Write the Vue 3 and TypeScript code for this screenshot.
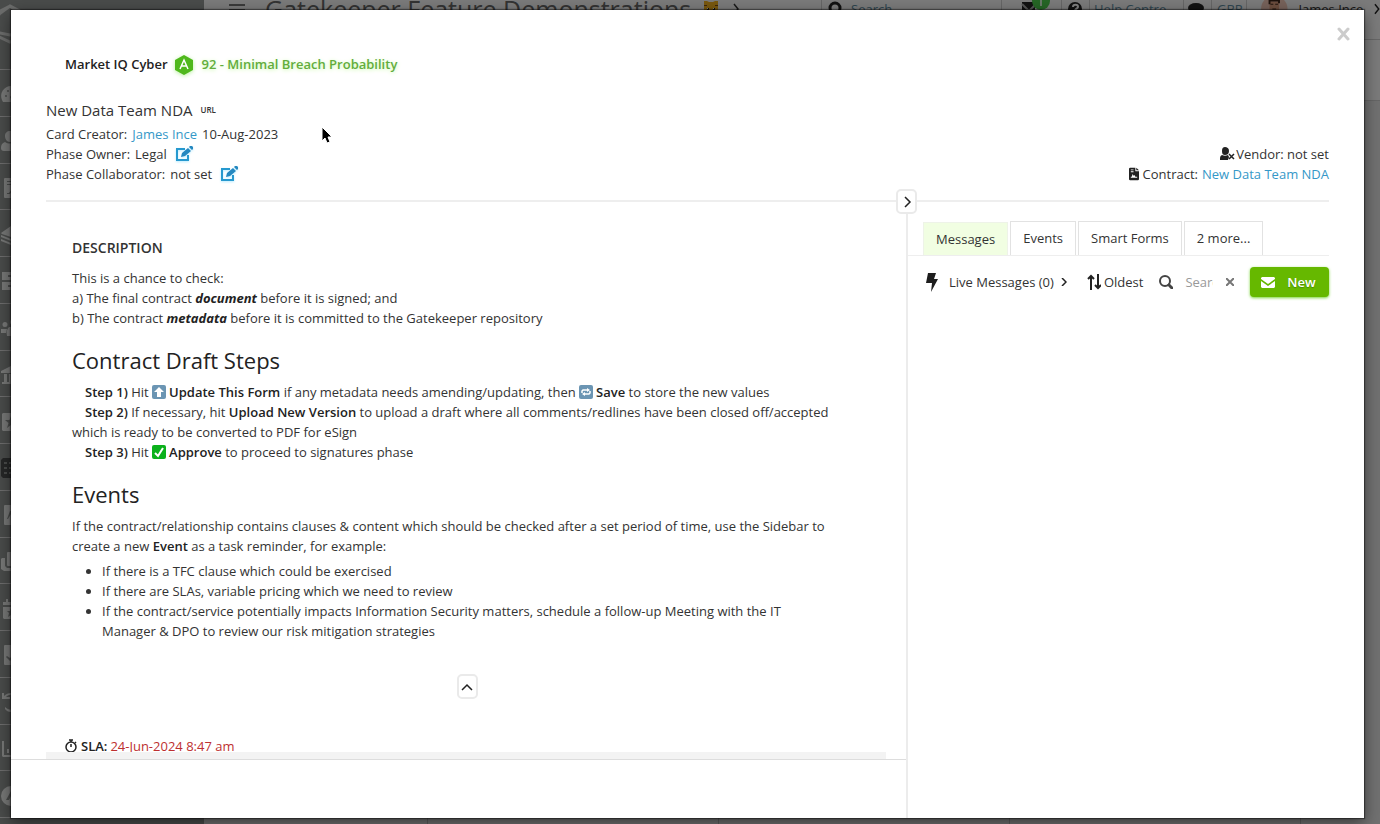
<script setup lang="ts">
import { ref } from 'vue'

interface SideItem {
  name: string
  path: string
  active?: boolean
}

const sideItems: SideItem[] = [
  { name: 'Dashboard', path: 'M10 2a10 10 0 0 0-9 14l1 2h16l1-2a10 10 0 0 0-9-14ZM5 13a1 1 0 1 1 0-2 1 1 0 0 1 0 2Zm2-5a1 1 0 1 1 0-2 1 1 0 0 1 0 2Zm5 6-2 1-1-2 5-6Z' },
  { name: 'Vendors', path: 'M9 0c3 0 5 2 5 5s-2 6-5 6-5-3-5-6 2-5 5-5ZM4 11c-3 1-4 3-4 6 0 2 1 3 3 3h13c2 0 3-1 3-3 0-3-2-5-5-6-3 2-7 2-10 0Z' },
  { name: 'Contracts', path: 'M4 0h14v20H4a1 1 0 0 1-1-1V1a1 1 0 0 1 1-1Zm2 3v1h7V3Zm0 3v1h5V6Zm0 10h3l2-3 1 3h4v-1h-3l-2-4-3 4H6Z' },
  { name: 'Categories', path: 'M10 1 0 8l1 1 9 3 9-3 1-1ZM0 10v2l10 4 10-4v-2l-10 4Zm0 4v2l10 4 10-4v-2l-10 4Z' },
  { name: 'Files', path: 'M1 1h18v8H1Zm0 10h18v8H1ZM7 4v2h6V4Zm0 10v2h6v-2Z' },
  { name: 'Teams', path: 'M4 4a2.500 2.500 0 1 1 0 5 2.500 2.500 0 0 1 0-5Zm8-3a3 3 0 1 1 0 6 3 3 0 0 1 0-6ZM0 11h6l-1 4H0Zm8-2h8c3 2 3 6 2 9H6c-1-4 0-7 2-9Z' },
  { name: 'Entities', path: 'M10 1 0 6v2h20V6ZM3 9v8H1v2h18v-2h-2V9h-3v8h-2V9H8v8H6V9Z' },
  { name: 'Favourites', path: 'M2 1h16l1 1v16l-1 1H2l-1-1V2Zm8 3-1.500 4H4l3.500 3L6 16l4-3 4 3-1.500-5L16 8h-4.500Z' },
  { name: 'Workflow', path: 'M2 0h16l2 2v16l-2 2H2l-2-2V2Zm1 4v2h3V4Zm5 0v2h3V4Zm5 0v2h4V4ZM3 9v2h3V9Zm5 0v2h3V9Zm5 0v2h4V9ZM3 14v2h3v-2Zm5 0v2h3v-2Zm5 0v2h4v-2Z', active: true },
  { name: 'Forms', path: 'M4 0h14v20H4a1 1 0 0 1-1-1V1a1 1 0 0 1 1-1Zm5 6-3 8h1l3-5 2 5h2l-3-8Z' },
  { name: 'Copies', path: 'M7 0h12v14H7a1 1 0 0 1-1-1V1a1 1 0 0 1 1-1ZM1 6h3v8l2 2h9v3H3L0 17V7Z' },
  { name: 'Calendar', path: 'M5 0h2v3h7V0h2v3h3v3H2V3h3ZM2 8h17v12H3l-1-1Zm8 1-1 3H6l2 2-1 4 3-2 3 2-1-4 2-2h-3Z' },
  { name: 'Tasks', path: 'M4 0h14v20H4a1 1 0 0 1-1-1V1a1 1 0 0 1 1-1Zm2 11-1 1 4 4 7-8-1-1-6 6Z' },
  { name: 'History', path: 'M1 1h2v3c4-4 11-4 14 1l-2 1c-2-4-7-4-10-1h4v2H1Zm3 14c3 3 8 4 12 0l1 1c-4 5-10 5-13 1Z' },
  { name: 'Reports', path: 'M1 2h2v14h17v2H2l-1-1Zm5 8h2v4H6Zm4-4h2v8h-2Zm4 3h2v5h-2Z' },
  { name: 'Admin', path: 'M10 0a10 10 0 1 1 0 20 10 10 0 0 1 0-20Zm0 5-5 9h3l2-4 2 4h3Z' },
]

const tabs = ['Messages', 'Events', 'Smart Forms', '2 more...']
const activeTab = ref('Messages')
const query = ref('')
</script>

<template>
  <div class="screen">
    <div class="backdrop" inert>
      <aside class="sidebar">
        <div class="logo">
          <svg width="40" height="40" viewBox="0 0 40 40" fill="none" stroke="#d8dad9" stroke-width="3">
            <path d="M20 2 3 11v19l17 8 17-8V11ZM20 2 9 10 5 28l15 3 15-3-4-18Z" />
          </svg>
        </div>
        <div v-for="item in sideItems" :key="item.name" class="side-row" :class="{ active: item.active }">
          <svg width="20" height="20" viewBox="0 0 20 20" fill="currentColor" fill-rule="evenodd">
            <path :d="item.path" />
          </svg>
        </div>
      </aside>
      <div class="page">
        <header class="topbar">
          <svg class="burger" width="16" height="16" viewBox="0 0 16 16" stroke="#777" stroke-width="2">
            <path d="M0 4h16M0 9h16M0 14h16" />
          </svg>
          <span class="site">Gatekeeper Feature Demonstrations</span>
          <svg class="pet" width="16" height="18" viewBox="0 0 16 18">
            <path fill="#f2b01e" d="M1 1h3l2 1h4l2-1h3v15H1Z" />
            <path fill="#7a4a10" d="M1 5h3v1H1Zm11 0h3v1h-3Z" />
            <path fill="#222" d="M4 8h2v3H4Zm6 0h2v3h-2Z" />
            <path fill="#fff" d="M4 8h1v1H4Zm6 0h1v1h-1Z" />
          </svg>
          <svg class="more" width="6" height="12" viewBox="0 0 6 12" fill="none" stroke="#333" stroke-width="1.500">
            <path d="m1 1 4 5-4 5" />
          </svg>
          <div class="seg find">
            <svg width="14" height="16" viewBox="0 0 14 16" fill="none" stroke="#222" stroke-width="3">
              <circle cx="7" cy="7" r="5" /><path d="m10 11 4 5" />
            </svg>
            <span class="tint">Search</span>
          </div>
          <div class="seg mail">
            <svg width="30" height="20" viewBox="0 0 30 20">
              <path fill="#222" d="M1 3h13v12H1Z" /><path d="m1 5 7 7 7-7" stroke="#aaa" fill="none" stroke-width="2" />
              <circle cx="20" cy="2" r="9" fill="#4ccd4c" /><path d="M20 0v7" stroke="#fff" stroke-width="1.500" />
            </svg>
          </div>
          <div class="seg help">
            <svg width="14" height="14" viewBox="0 0 14 14">
              <circle cx="7" cy="7" r="7" fill="#222" />
              <path d="M5 5c0-3 5-3 5 0 0 2-3 1-3 4M7 10v2" stroke="#fff" stroke-width="2" fill="none" />
            </svg>
          </div>
          <div class="seg centre"><span class="tint">Help Centre</span></div>
          <div class="seg chat">
            <svg width="16" height="12" viewBox="0 0 16 12"><ellipse cx="8" cy="5" rx="8" ry="5" fill="#222" /></svg>
          </div>
          <div class="seg money"><span class="tint">GBP</span></div>
          <div class="seg user">
            <svg width="28" height="28" viewBox="0 0 28 28">
              <circle cx="14" cy="14" r="14" fill="#eec5b5" />
              <path fill="#d99c7c" d="M9 6h10v9l-3 4h-4l-3-4Z" />
              <path fill="#3a2418" d="M8 3h12v5h-2V6h-8v3H8Z" />
              <path d="M10 9h3m2 0h3m-6 5h4" stroke="#3a2418" />
            </svg>
            <span>James Ince</span>
            <svg width="6" height="12" viewBox="0 0 6 12" fill="none" stroke="#222" stroke-width="1.500">
              <path d="m1 1 4 5-4 5" />
            </svg>
          </div>
        </header>
        <div class="page-head"></div>
        <div class="page-tools"></div>
        <div class="board"><i v-for="n in 4" :key="n"></i></div>
      </div>
      <div class="dim"></div>
    </div>

    <section class="modal" role="dialog" aria-label="New Data Team NDA">
      <button class="close" type="button" aria-label="Close">
        <svg width="14" height="14" viewBox="0 0 14 14" stroke="#ccc" stroke-width="3" stroke-linecap="round">
          <path d="m3 2 9 10M12 2 3 12" />
        </svg>
      </button>

      <header class="card-head">
        <div class="risk">
          <strong>Market IQ Cyber</strong>
          <svg class="grade" width="20" height="22" viewBox="0 0 20 22">
            <path fill="#4fb81c" d="m10 1 9 5v10l-9 5-9-5V6Z" />
            <path d="m6 15 4-9 4 9M7 12h6" stroke="#fff" stroke-width="1.500" fill="none" />
          </svg>
          <strong class="score">92 - Minimal Breach Probability</strong>
        </div>
        <div class="title-row">
          <h1>New Data Team NDA</h1>
          <span class="url">URL</span>
        </div>
        <div class="meta">
          <div class="facts">
            <p>Card Creator: <a href="#creator">James Ince</a> <span>10-Aug-2023</span></p>
            <p>
              Phase Owner: <span>Legal</span>
              <button class="edit" type="button" aria-label="Edit phase owner">
                <svg width="18" height="16" viewBox="0 0 18 16">
                  <path d="M10 3H2v11h11V9" fill="none" stroke="#2699cf" stroke-width="2" />
                  <path fill="#2488c0" d="m6 11 1-4 6-5 3 3-6 5Zm8-10 1-1h2l1 1v2l-1 1Z" />
                </svg>
              </button>
            </p>
            <p>
              Phase Collaborator: <span>not set</span>
              <button class="edit" type="button" aria-label="Edit phase collaborator">
                <svg width="18" height="16" viewBox="0 0 18 16">
                  <path d="M10 3H2v11h11V9" fill="none" stroke="#2699cf" stroke-width="2" />
                  <path fill="#2488c0" d="m6 11 1-4 6-5 3 3-6 5Zm8-10 1-1h2l1 1v2l-1 1Z" />
                </svg>
              </button>
            </p>
          </div>
          <div class="links">
            <p>
              <svg width="15" height="14" viewBox="0 0 15 14" fill="#222">
                <path d="M5 0c2 0 4 1 4 4S7 8 5 8 2 7 2 4s1-4 3-4ZM2 8c2 1 4 1 6 0l1 2-1 3H0c0-3 0-4 2-5Z" />
                <path d="m9 7 5 5M14 7l-5 5" stroke="#222" stroke-width="1.500" fill="none" />
              </svg>Vendor: not set
            </p>
            <p>
              <svg class="doc" width="10" height="14" viewBox="0 0 11 14" fill-rule="evenodd" fill="#222">
                <path d="M0 1 1 0h6v4h4v9l-1 1H1l-1-1Zm8-1 3 3H8ZM2 2v1h3V2Zm0 2v1h3V4Zm0 7h7v-1H7L6 8 5 9 4 7l-1 3H2Z" />
              </svg>
              Contract: <a href="#contract">New Data Team NDA</a>
            </p>
          </div>
        </div>
      </header>

      <div class="columns">
        <div class="left">
          <main class="content">
            <article class="prose">
              <h4>DESCRIPTION</h4>
              <p>
                This is a chance to check:<br />
                a) The final contract <em>document</em> before it is signed; and<br />
                b) The contract <em>metadata</em> before it is committed to the Gatekeeper repository
              </p>
              <h2>Contract Draft Steps</h2>
              <p class="step">
                <b>Step 1)</b> Hit
                <svg class="emoji" width="14" height="14" viewBox="0 0 14 14">
                  <rect width="14" height="14" rx="2" fill="#6b95b3" /><path fill="#fff" d="m7 2 5 5H9v5H5V7H2Z" />
                </svg>
                <b>Update This Form</b> if any metadata needs amending/updating, then
                <svg class="emoji" width="14" height="14" viewBox="0 0 14 14">
                  <rect width="14" height="14" rx="2" fill="#6b95b3" />
                  <path d="M3 8V6l1-1h5M11 6v2l-1 1H5" stroke="#fff" stroke-width="1.500" fill="none" />
                  <path fill="#fff" d="m8 3 3 2-3 2ZM6 7v4L3 9Z" />
                </svg>
                <b>Save</b> to store the new values
              </p>
              <p class="step">
                <b>Step 2)</b> If necessary, hit <b>Upload New Version</b> to upload a draft where all comments/redlines
                have been closed off/accepted which is ready to be converted to PDF for eSign
              </p>
              <p class="step">
                <b>Step 3)</b> Hit
                <svg class="emoji" width="14" height="14" viewBox="0 0 14 14">
                  <rect width="14" height="14" rx="2" fill="#0bb11c" />
                  <path d="m3 8 3 3 5-8" stroke="#fff" stroke-width="2" fill="none" />
                </svg>
                <b>Approve</b> to proceed to signatures phase
              </p>
              <h2>Events</h2>
              <p>
                If the contract/relationship contains clauses &amp; content which should be checked after a set period of
                time, use the Sidebar to create a new <b>Event</b> as a task reminder, for example:
              </p>
              <ul>
                <li>If there is a TFC clause which could be exercised</li>
                <li>If there are SLAs, variable pricing which we need to review</li>
                <li>
                  If the contract/service potentially impacts Information Security matters, schedule a follow-up Meeting
                  with the IT Manager &amp; DPO to review our risk mitigation strategies
                </li>
              </ul>
            </article>
            <div class="fold">
              <button class="knob" type="button" aria-label="Collapse description">
                <svg width="12" height="12" viewBox="0 0 12 12" fill="none" stroke="#222" stroke-width="1.500">
                  <path d="m1 9 5-5 5 5" />
                </svg>
              </button>
            </div>
            <p class="sla">
              <svg width="12" height="14" viewBox="0 0 12 14" fill="none" stroke="#222" stroke-width="1.500">
                <circle cx="6" cy="8" r="5" /><path d="M6 5v3M4 1h4M6 1v2M10 3l1 1" />
              </svg>
              <b>SLA:</b> <span>24-Jun-2024 8:47 am</span>
            </p>
            <div class="panel"></div>
          </main>
          <footer class="actions"></footer>
        </div>

        <aside class="right">
          <button class="knob collapse" type="button" aria-label="Collapse sidebar">
            <svg width="12" height="12" viewBox="0 0 12 12" fill="none" stroke="#222" stroke-width="1.500">
              <path d="m4 1 5 5-5 5" />
            </svg>
          </button>
          <nav class="tabs" role="tablist">
            <button
              v-for="tab in tabs"
              :key="tab"
              type="button"
              role="tab"
              :aria-selected="tab === activeTab"
              :class="{ on: tab === activeTab }"
              @click="activeTab = tab"
            >{{ tab }}</button>
          </nav>
          <div class="tools">
            <svg class="bolt" width="14" height="20" viewBox="0 0 14 20" fill="#1d1d1d">
              <path d="M3 1h8L9 7h4L6 20l1-9H1Z" />
            </svg>
            <button class="plain live" type="button">
              Live Messages (0)
              <svg width="6" height="8" viewBox="0 0 6 8" fill="none" stroke="#222" stroke-width="1.500">
                <path d="m1 0 4 4-4 4" />
              </svg>
            </button>
            <button class="plain sort" type="button">
              <svg width="14" height="16" viewBox="0 0 14 16" fill="none" stroke="#222" stroke-width="2">
                <path d="M4 16V2M1 5l3-3 3 3M11 0v14M8 11l3 3 3-3" />
              </svg>Oldest
            </button>
            <label class="search" for="message-search">
              <svg width="14" height="14" viewBox="0 0 14 14" fill="none" stroke="#444" stroke-width="2">
                <circle cx="6" cy="6" r="5" /><path d="m9 9 5 5" stroke-width="3" />
              </svg>
            </label>
            <input id="message-search" v-model="query" type="text" placeholder="Search" aria-label="Search messages" />
            <button class="plain clear" type="button" aria-label="Clear search" @click="query = ''">
              <svg width="8" height="8" viewBox="0 0 8 8" stroke="#777" stroke-width="2">
                <path d="m0 0 8 8M8 0 0 8" />
              </svg>
            </button>
            <button class="new" type="button">
              <svg width="14" height="11" viewBox="0 0 14 11">
                <path fill="#fff" d="M1 0h12l1 1v1L7 7 0 2V1ZM0 4l7 5 7-5v6l-1 1H1l-1-1Z" />
              </svg>
              New
            </button>
          </div>
        </aside>
      </div>
    </section>

    <svg class="pointer" width="12" height="18" viewBox="0 0 12 18">
      <path d="M1 1v14l3-3 2 5 3-1-2-5h4Z" fill="#000" stroke="#fff" />
    </svg>
  </div>
</template>

<style>
body {
  margin: 0;
  overflow: hidden;
}
</style>

<style scoped>
.screen {
  position: relative;
  height: 100vh;
  font: 13px/20px 'Open Sans', 'Noto Sans', sans-serif;
  color: #333;
  overflow: hidden;
}
p, h1, h2, h4, ul { margin: 0; }
b, strong { font-weight: 600; color: #222; }
em { font-weight: 700; color: #222; }
a { color: #3598c8; text-decoration: none; }
button { font: inherit; color: inherit; padding: 0; border: 0; background: none; cursor: pointer; }

.backdrop { display: flex; height: 100%; overflow: hidden; }
.dim { position: absolute; inset: 0; background: rgba(0, 0, 0, 0.5); }
.sidebar { width: 204px; flex: none; display: flex; flex-direction: column; background: #959896; padding-bottom: 6px; box-sizing: border-box; }
.logo { height: 70px; box-sizing: border-box; padding-top: 4px; border-bottom: 1px solid #ddd; }
.logo svg { display: block; margin-left: -10px; }
.side-row { flex: 1; display: flex; align-items: center; padding: 3px 0 0 1px; border-bottom: 1px solid #ddd; color: #f0f2f1; min-height: 0; }
.side-row.active { color: #4c4f4e; }
.page { flex: 1; min-width: 0; display: flex; flex-direction: column; background: #f6f6f6; }
.topbar { height: 17px; flex: none; display: flex; align-items: center; padding-left: 25px; white-space: nowrap; }
.topbar > svg { flex: none; }
.site { font-size: 25px; margin-left: 20px; color: #666; }
.pet { margin-left: 12px; }
.more { margin-left: 14px; }
.seg { display: flex; align-items: center; height: 34px; border-left: 1px solid #ccc; box-sizing: border-box; flex: none; }
.tint { color: #5d8ba0; }
.find { margin-left: auto; width: 180px; padding-left: 6px; gap: 9px; }
.mail { width: 60px; padding-left: 19px; }
.help { width: 28px; padding-left: 6px; }
.centre { width: 94px; padding-left: 4px; }
.chat { width: 28px; padding-left: 4px; }
.money { width: 35px; padding-left: 5px; }
.user { width: 134px; padding-left: 14px; gap: 11px; }
.page-head { height: 22px; border-bottom: 1px solid #ccc; flex: none; }
.page-tools { height: 60px; border-bottom: 1px solid #ccc; flex: none; }
.board { flex: 1; display: flex; background: #e2e2e2; }
.board i { width: 291px; flex: none; box-sizing: border-box; border-right: 1px solid #bbb; }
.board i:first-child { width: 224px; }

.modal {
  position: absolute;
  inset: 10px 16px 6px 11px;
  display: flex;
  flex-direction: column;
  background: #fff;
  box-shadow: 0 5px 15px rgba(0, 0, 0, 0.5), 0 0 1px 1px rgba(0, 0, 0, 0.4);
}
.close { position: absolute; top: 17px; right: 14px; width: 14px; height: 14px; }
.close svg { display: block; }
.card-head { margin: 0 35px; padding-top: 42px; border-bottom: 2px solid #eee; }
.risk { display: flex; align-items: center; height: 24px; padding-left: 19px; }
.grade { margin: 1px 8px 0 6px; filter: drop-shadow(0 1px 2px #b9f0a0); }
.score { color: #62ad3c; text-shadow: 0 1px 4px #c8f7a8; }
.title-row { display: flex; align-items: center; gap: 8px; margin-top: 24px; }
h1 { font-size: 15px; line-height: 20px; font-weight: 400; }
.url { font-size: 8px; font-weight: 600; }
.meta { display: flex; justify-content: space-between; align-items: flex-end; margin-top: 4px; padding-bottom: 16px; }
.facts span, .facts a { margin-left: 1px; }
.facts p, .links p { display: flex; align-items: center; gap: 4px; height: 20px; }
.links p { justify-content: flex-end; }
.links p:first-child { gap: 1px; }
.edit { height: 16px; margin-left: 4px; filter: drop-shadow(0 1px 1px #b8ebff); }
.edit svg { display: block; }

.columns { flex: 1; min-height: 0; display: grid; grid-template-columns: minmax(0, 895fr) minmax(0, 458fr); }
.left { display: flex; flex-direction: column; min-height: 0; }
.content { flex: 1; min-height: 0; overflow: hidden; display: flex; flex-direction: column; }
.prose { margin: 36px 61px 0; padding-right: 16px; }
h4 { font-size: 14px; line-height: 20px; font-weight: 600; margin-bottom: 10px; }
h2 { font-size: 22px; line-height: 24px; font-weight: 400; color: #222; margin: 20px 0 10px; }
.step { text-indent: 13px; }
.emoji { vertical-align: -2px; margin-right: 3px; }
ul { margin-top: 5px; padding-left: 30px; }
.fold { display: flex; justify-content: center; margin: 33px 0 37px 17px; }
.knob { width: 21px; height: 25px; box-sizing: border-box; border: 2px solid #eaeaea; border-radius: 5px; background: #fff; display: flex; align-items: center; justify-content: center; }
.sla { display: flex; align-items: center; gap: 4px; margin-left: 54px; }
.sla span { color: #bd3030; margin-left: -1px; }
.panel { margin: -4px 20px 0 35px; height: 60px; flex: none; background: #f3f3f3; }
.actions { height: 58px; flex: none; border-top: 1px solid #ddd; position: relative; background: #fff; }

.right { position: relative; border-left: 2px solid #ececec; min-width: 0; }
.collapse { position: absolute; top: -13px; left: -12px; }
.tabs { display: flex; gap: 2px; align-items: flex-end; margin: 19px 35px 0 0; padding-left: 15px; border-bottom: 1px solid #eee; }
.tabs button { height: 34px; padding: 0 12px 1px; border: 1px solid #e2e2e2; border-bottom: 0; white-space: nowrap; }
.tabs button.on { height: 33px; background: #f1fee2; border-color: #eef3e8; padding: 0 12px; }
.tools { display: flex; align-items: center; height: 30px; margin: 11px 35px 0 17px; }
.tools > * { flex: none; }
.plain { display: flex; align-items: center; }
.live { margin-left: 10px; gap: 7px; }
.sort { margin-left: 20px; gap: 3px; }
.search { margin-left: 16px; height: 14px; display: flex; }
.tools input { flex: 1; min-width: 0; width: 0; border: 0; outline: 0; background: none; padding: 0; margin: 0 13px 0 12px; font: inherit; color: #333; }
.tools input::placeholder { color: #999; opacity: 1; }
.clear { margin-right: 16px; }
.new { width: 79px; height: 30px; box-sizing: border-box; padding-right: 2px; border-radius: 4px; background: #66b800; color: #fff; font-weight: 600; display: flex; align-items: center; justify-content: center; gap: 12px; box-shadow: 0 1px 3px #7ad33a; text-shadow: 0 1px 1px #4a8d00; }

.pointer { position: absolute; left: 321px; top: 126px; }
</style>
